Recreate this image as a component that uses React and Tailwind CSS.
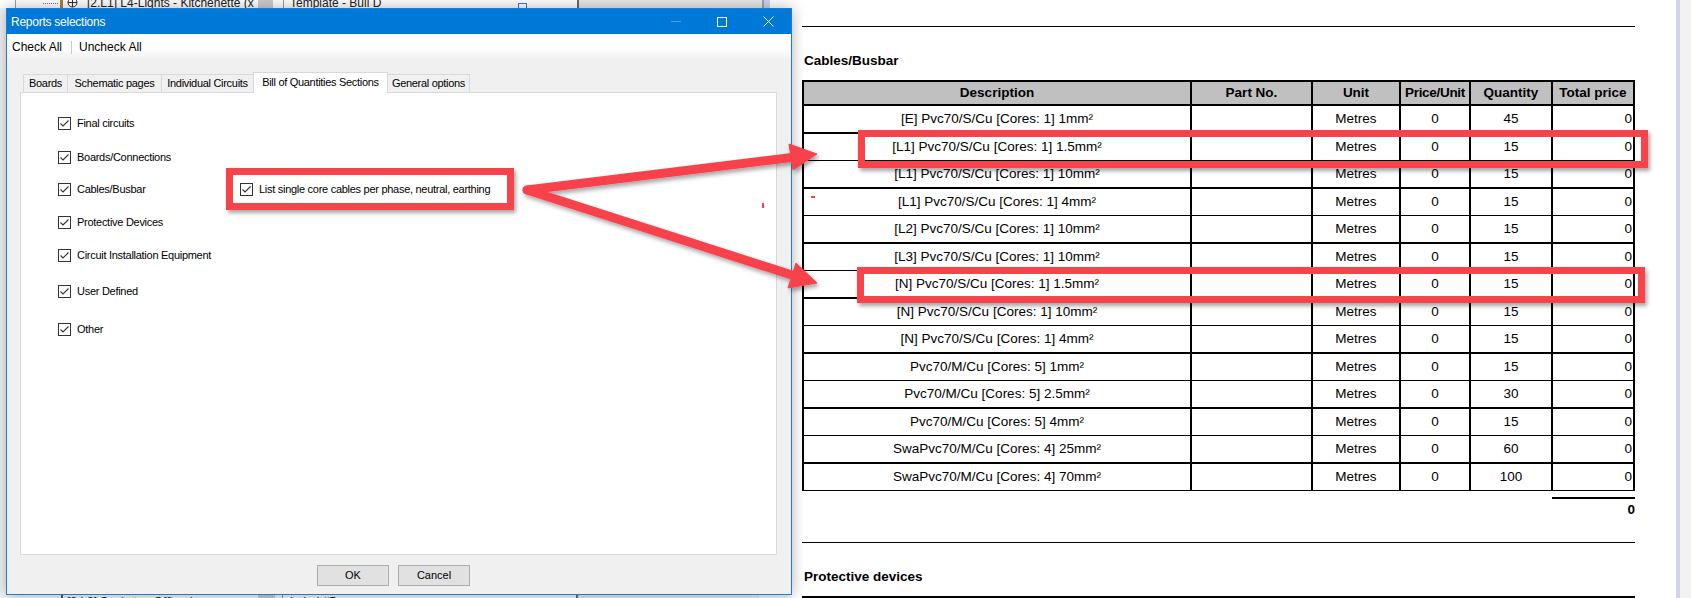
import React from "react";

const ROWS = [
  ["[E] Pvc70/S/Cu [Cores: 1] 1mm²", "45"],
  ["[L1] Pvc70/S/Cu [Cores: 1] 1.5mm²", "15"],
  ["[L1] Pvc70/S/Cu [Cores: 1] 10mm²", "15"],
  ["[L1] Pvc70/S/Cu [Cores: 1] 4mm²", "15"],
  ["[L2] Pvc70/S/Cu [Cores: 1] 10mm²", "15"],
  ["[L3] Pvc70/S/Cu [Cores: 1] 10mm²", "15"],
  ["[N] Pvc70/S/Cu [Cores: 1] 1.5mm²", "15"],
  ["[N] Pvc70/S/Cu [Cores: 1] 10mm²", "15"],
  ["[N] Pvc70/S/Cu [Cores: 1] 4mm²", "15"],
  ["Pvc70/M/Cu [Cores: 5] 1mm²", "15"],
  ["Pvc70/M/Cu [Cores: 5] 2.5mm²", "30"],
  ["Pvc70/M/Cu [Cores: 5] 4mm²", "15"],
  ["SwaPvc70/M/Cu [Cores: 4] 25mm²", "60"],
  ["SwaPvc70/M/Cu [Cores: 4] 70mm²", "100"],
];

const CHECKS = [
  { label: "Final circuits", mt: "mt-[22px]" },
  { label: "Boards/Connections", mt: "mt-[18px]" },
  { label: "Cables/Busbar", mt: "mt-[16px]", extra: true },
  { label: "Protective Devices", mt: "mt-[17px]" },
  { label: "Circuit Installation Equipment", mt: "mt-[17px]" },
  { label: "User Defined", mt: "mt-[20px]" },
  { label: "Other", mt: "mt-[22px]" },
];

const Check = () => (
  <span className="w-[13px] h-[13px] shrink-0 border border-[#333] bg-white flex items-center justify-center">
    <svg width="11" height="11" viewBox="0 0 11 11">
      <polyline points="1.5,5.5 4,8 9.5,2.5" fill="none" stroke="#333" strokeWidth="1.1" />
    </svg>
  </span>
);

const Row = ({ desc, qty, thick }) => (
  <div
    className={
      thick
        ? "flex shrink-0 h-[28px] border-x-2 border-b-2 border-black"
        : "flex shrink-0 h-[27px] border-x-2 border-b border-black"
    }
  >
    <div className="w-[388px] border-r-2 border-black flex items-center justify-center">{desc}</div>
    <div className="w-[121px] border-r-2 border-black" />
    <div className="w-[88px] border-r-2 border-black flex items-center justify-center">Metres</div>
    <div className="w-[70px] border-r-2 border-black flex items-center justify-center">0</div>
    <div className="w-[82px] border-r-2 border-black flex items-center justify-center">{qty}</div>
    <div className="flex-1 flex items-center justify-end pr-[1px]">0</div>
  </div>
);

const Header = () => (
  <div className="flex shrink-0 h-[26px] border-2 border-black bg-[#c0c0c0] font-bold">
    <div className="w-[388px] border-r-2 border-black flex items-center justify-center">Description</div>
    <div className="w-[121px] border-r-2 border-black flex items-center justify-center">Part No.</div>
    <div className="w-[88px] border-r-2 border-black flex items-center justify-center">Unit</div>
    <div className="w-[70px] border-r-2 border-black flex items-center justify-center tracking-[-0.3px]">Price/Unit</div>
    <div className="w-[82px] border-r-2 border-black flex items-center justify-center">Quantity</div>
    <div className="flex-1 flex items-center justify-center">Total price</div>
  </div>
);

export default function App() {
  return (
    <div className="relative w-[1691px] h-[598px] overflow-hidden bg-white flex font-['Liberation_Sans',Arial,sans-serif] text-black">
      {/* application behind the dialog */}
      <div className="w-[790px] shrink-0 h-full flex flex-col bg-[#f3f3f3]">
        <div className="h-[8px] shrink-0 flex overflow-hidden bg-white text-[12px] leading-[14px] text-[#222]">
          <div className="w-[15px] shrink-0" />
          <div className="w-px shrink-0 bg-[#a0a0a0]" />
          <div className="w-[27px] shrink-0" />
          <div className="w-[15px] shrink-0 mt-[3px] h-px border-t border-dotted border-[#777]" />
          <div className="w-[2px] shrink-0" />
          <div className="w-[3px] shrink-0 bg-[#b27b46]" />
          <div className="w-[4px] shrink-0" />
          <svg width="11" height="8" viewBox="0 3 11 8" className="shrink-0">
            <circle cx="5.5" cy="5.5" r="4.5" fill="none" stroke="#333" />
            <line x1="5.5" y1="1" x2="5.5" y2="10" stroke="#333" />
            <line x1="1" y1="5.5" x2="10" y2="5.5" stroke="#333" />
          </svg>
          <div className="w-[9px] shrink-0" />
          <div className="w-[171px] shrink-0 -mt-[4px] whitespace-nowrap overflow-hidden">[2.L1] L4-Lights - Kitchenette (x</div>
          <div className="w-[15px] shrink-0 bg-[#cdcdcd]" />
          <div className="w-[10px] shrink-0" />
          <div className="w-px shrink-0 bg-[#999]" />
          <div className="w-[6px] shrink-0" />
          <div className="w-[228px] shrink-0 -mt-[4px] whitespace-nowrap">Template - Bull D</div>
          <div className="w-[9px] h-[6px] mt-[3px] shrink-0 border border-[#3b7bd4]" />
          <div className="w-[50px] shrink-0" />
          <div className="w-[2px] shrink-0 bg-[#6b6b6b]" />
          <div className="w-[183px] shrink-0 bg-[#e8e8e8]" />
          <div className="w-[2px] shrink-0 bg-[#a5a5a5]" />
          <div className="w-[6px] shrink-0 bg-[#c9d6ef]" />
        </div>
        <div className="flex-1" />
        <div className="h-[3px] shrink-0 flex overflow-hidden text-[12px] leading-[14px] text-[#222]">
          <div className="w-[61px] shrink-0" />
          <div className="w-[2px] shrink-0 bg-[#555]" />
          <div className="w-[4px] shrink-0" />
          <div className="w-[191px] shrink-0 whitespace-nowrap overflow-hidden">[3.L3] Sockets - Office (x</div>
          <div className="w-[17px] shrink-0 bg-[#c8c8c8]" />
          <div className="w-[7px] shrink-0" />
          <div className="w-px shrink-0 bg-[#999]" />
          <div className="w-[7px] shrink-0" />
          <div className="w-[286px] shrink-0 whitespace-nowrap">Label #Be...</div>
          <div className="w-[2px] shrink-0 bg-[#6b6b6b]" />
          <div className="w-[181px] shrink-0 bg-[#e8e8e8]" />
        </div>
      </div>

      {/* report page */}
      <div className="w-[886px] shrink-0 h-full bg-white pl-[12px] flex flex-col text-[13.5px] leading-[16px]">
        <div className="w-[833px] shrink-0 mt-[26px] h-px bg-black" />
        <div className="shrink-0 mt-[26px] pl-[2px] font-bold">Cables/Busbar</div>
        <div className="w-[833px] shrink-0 mt-[11px] flex flex-col">
          <Header />
          {ROWS.map(([desc, qty], i) => (
            <Row key={desc} desc={desc} qty={qty} thick={i % 2 === 0 && i !== ROWS.length - 1} />
          ))}
        </div>
        <div className="w-[833px] shrink-0 flex flex-col items-end">
          <div className="w-[83px] h-[2px] mt-[6px] bg-black" />
          <div className="mt-[3px] font-bold">0</div>
        </div>
        <div className="w-[833px] shrink-0 mt-[24px] h-px bg-black" />
        <div className="shrink-0 mt-[26px] pl-[2px] font-bold">Protective devices</div>
        <div className="w-[833px] shrink-0 mt-[11px]">
          <Header />
        </div>
      </div>

      {/* scroll bar strip */}
      <div className="flex-1 flex">
        <div className="w-[4px] bg-[#cfd6ea]" />
        <div className="flex-1 bg-[#f2f2f2]" />
      </div>

      {/* Reports selections dialog */}
      <div className="absolute left-[6px] top-[8px] w-[786px] h-[587px] border border-[#1a7fd4] bg-[#f0f0f0] shadow-[0_0_14px_rgba(0,0,0,0.3)] flex flex-col font-['Segoe_UI','Liberation_Sans',Arial,sans-serif] text-black">
        <div className="h-[25px] shrink-0 bg-[#0078d7] flex items-center text-white">
          <span className="pl-[4px] text-[12px] tracking-[-0.25px]">Reports selections</span>
          <div className="ml-auto flex h-full">
            <div className="w-[46px] flex items-center justify-center">
              <span className="w-[10px] h-px bg-[#4a9ee4]" />
            </div>
            <div className="w-[46px] flex items-center justify-center">
              <span className="w-[10px] h-[10px] border border-white" />
            </div>
            <div className="w-[46px] flex items-center justify-center">
              <svg width="11" height="11" viewBox="0 0 11 11">
                <path d="M0.5 0.5 L10.5 10.5 M10.5 0.5 L0.5 10.5" stroke="#fff" strokeWidth="1" />
              </svg>
            </div>
          </div>
        </div>
        <div className="h-[26px] shrink-0 bg-gradient-to-b from-white from-50% to-[#f0f0f0] flex items-center text-[12px] pl-[5px]">
          <span>Check All</span>
          <span className="w-px h-[13px] bg-[#c8c8c8] ml-[9px] mr-[7px]" />
          <span>Uncheck All</span>
        </div>
        <div className="h-[12px] shrink-0" />
        <div className="h-[20px] shrink-0 flex items-end pl-[16px] text-[11px] tracking-[-0.3px] relative z-10">
          <div className="w-[45px] h-[18px] border border-b-0 border-[#d9d9d9] bg-[#f0f0f0] flex items-center justify-center">Boards</div>
          <div className="w-[95px] h-[18px] -ml-px border border-b-0 border-[#d9d9d9] bg-[#f0f0f0] flex items-center justify-center">Schematic pages</div>
          <div className="w-[93px] h-[18px] -ml-px border border-b-0 border-[#d9d9d9] bg-[#f0f0f0] flex items-center justify-center">Individual Circuits</div>
          <div className="w-[135px] h-[21px] -ml-px -mb-px border border-b-0 border-[#d9d9d9] bg-white flex items-center justify-center pb-[2px]">Bill of Quantities Sections</div>
          <div className="w-[83px] h-[18px] -ml-px border border-b-0 border-[#d9d9d9] bg-[#f0f0f0] flex items-center justify-center">General options</div>
        </div>
        <div className="h-[463px] w-[757px] shrink-0 ml-[13px] border border-[#d9d9d9] bg-white flex flex-col pl-[37px] text-[11px] tracking-[-0.28px]">
          {CHECKS.map((c) => (
            <div key={c.label} className={`${c.mt} h-[16px] shrink-0 flex items-center`}>
              <div className={c.extra ? "w-[182px] flex items-center gap-[6px]" : "flex items-center gap-[6px]"}>
                <Check />
                <span>{c.label}</span>
              </div>
              {c.extra && (
                <div className="flex items-center gap-[6px]">
                  <Check />
                  <span>List single core cables per phase, neutral, earthing</span>
                </div>
              )}
            </div>
          ))}
        </div>
        <div className="mt-[10px] flex pl-[310px] gap-[9px] text-[11px]">
          <button className="w-[72px] h-[21px] border border-[#adadad] bg-[#e1e1e1] flex items-center justify-center">OK</button>
          <button className="w-[72px] h-[21px] border border-[#adadad] bg-[#e1e1e1] flex items-center justify-center">Cancel</button>
        </div>
      </div>

      {/* annotations */}
      <div className="absolute left-[226px] top-[168px] w-[288px] h-[42px] border-[7px] border-[#f8434b] shadow-[2px_3px_4px_rgba(0,0,0,0.35)]" />
      <div className="absolute left-[858px] top-[130px] w-[790px] h-[38px] border-[7px] border-[#f8434b] shadow-[2px_3px_4px_rgba(0,0,0,0.35)]" />
      <div className="absolute left-[857px] top-[267px] w-[788px] h-[36px] border-[7px] border-[#f8434b] shadow-[2px_3px_4px_rgba(0,0,0,0.35)]" />
      <div className="absolute left-[762px] top-[203px] w-[2px] h-[5px] bg-[#f8434b]" />
      <div className="absolute left-[811px] top-[196px] w-[4px] h-[2px] bg-[#f8434b]" />
      <svg className="absolute left-0 top-0 pointer-events-none" width="1691" height="598">
        <defs>
          <filter id="sh" x="-10%" y="-20%" width="130%" height="150%">
            <feDropShadow dx="2" dy="3" stdDeviation="2" floodColor="#000" floodOpacity="0.35" />
          </filter>
        </defs>
        <g filter="url(#sh)" fill="#f8434b" stroke="#f8434b">
          <line x1="527" y1="190" x2="796" y2="157" strokeWidth="9" strokeLinecap="round" />
          <polygon points="817,154 793,170 789,144" strokeWidth="1" strokeLinejoin="round" />
          <line x1="527" y1="190" x2="795" y2="276" strokeWidth="9" strokeLinecap="round" />
          <polygon points="817,283 788,288 796,263" strokeWidth="1" strokeLinejoin="round" />
        </g>
      </svg>
    </div>
  );
}
